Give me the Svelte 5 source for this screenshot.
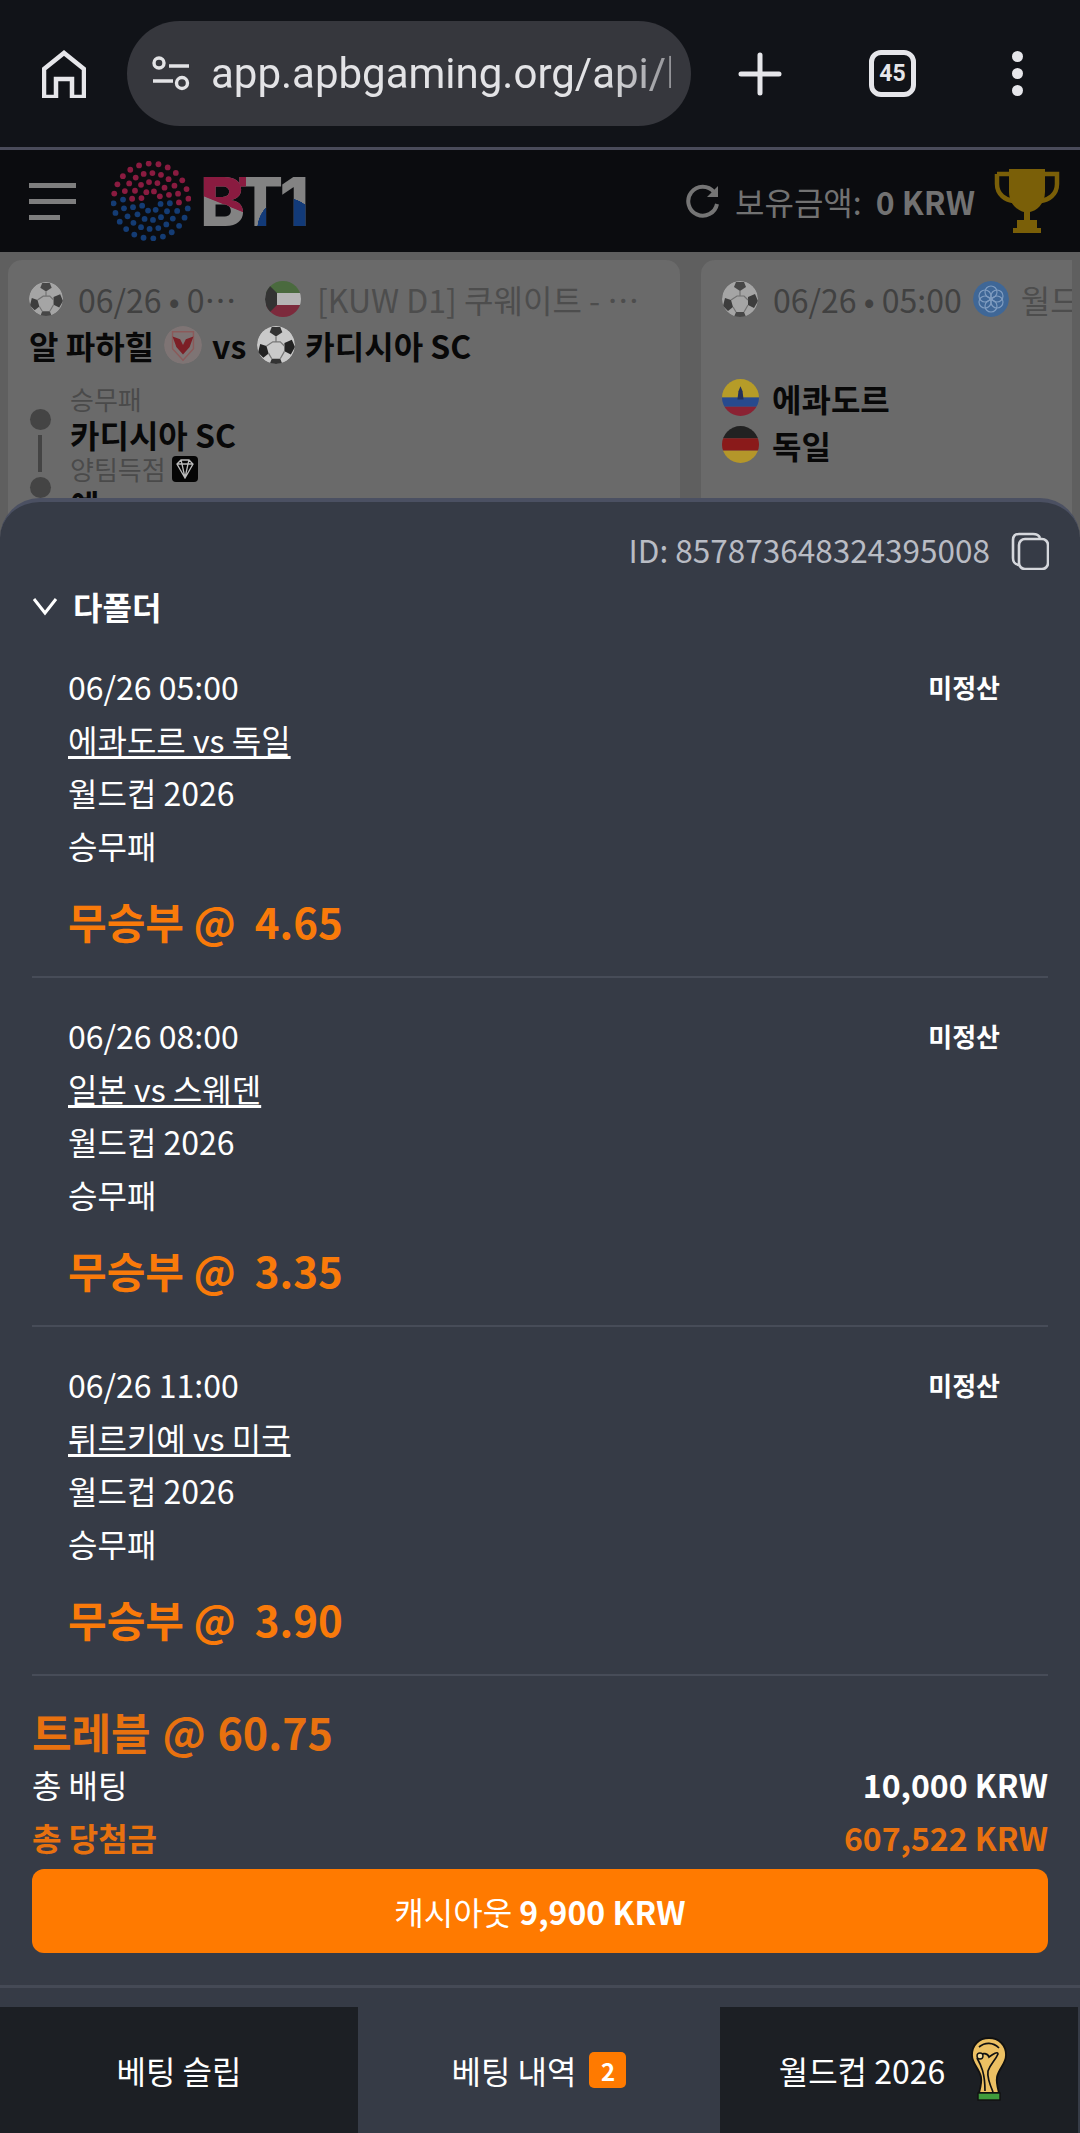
<script>
  const bets = [
    { date: '06/26 05:00', match: '에콰도르 vs 독일', odds: '4.65' },
    { date: '06/26 08:00', match: '일본 vs 스웨덴', odds: '3.35' },
    { date: '06/26 11:00', match: '튀르키예 vs 미국', odds: '3.90' }
  ];

  // logo dots, rings slightly twisted
  const dots = [];
  [[37.5, 24, 0.2], [28, 20, 0.05], [19, 14, 0.12], [10, 8, 0.3]].forEach(([r, n, off]) => {
    for (let i = 0; i < n; i++) {
      const a = (i / n) * Math.PI * 2 + off;
      const cx = 40 + r * Math.cos(a);
      const cy = 40 + r * Math.sin(a);
      dots.push({ cx, cy, fill: cy < 40 + (cx - 40) * 0.12 ? '#8a1b40' : '#143c74' });
    }
  });
</script>

{#snippet ball(size, dim)}
  <svg class="round" class:dim width={size} height={size} viewBox="0 0 36 36">
    <circle cx="18" cy="18" r="18" fill="#c9c9c9" />
    <path d="M14 1 L22 1 L24 6 L18 10 L12 6 Z" fill="#333" />
    <path d="M26 16 L33 13 L36 20 L32 27 L26 24 Z" fill="#222" />
    <path d="M3 17 L9 19 L11 26 L6 30 L1 25 Z" fill="#222" />
    <path d="M14 31 L22 31 L24 36 L12 36 Z" fill="#333" />
    <path d="M18 10 V15 M9 19 L15 15 H22 L26 19 M11 26 L14 31 M26 24 L22 31" stroke="#777" stroke-width="1.2" fill="none" />
  </svg>
{/snippet}

<div class="page">
  <div class="browser">
    <svg class="home" width="44" height="48" viewBox="0 0 44 48" fill="none" stroke="#e6e6ea" stroke-width="4.5">
      <path d="M2 47 V19 L22 3 L42 19 V47 H30 V29 H14 V47 Z" />
    </svg>
    <div class="pill">
      <svg width="40" height="40" viewBox="0 0 40 40" fill="none" stroke="#e3e3e6" stroke-width="3.4">
        <circle cx="8" cy="9" r="5" />
        <path d="M18 12 H38 M2 27 H22" />
        <circle cx="31" cy="29" r="5.5" />
      </svg>
      <span class="url">app.apbgaming.org/api/l</span>
    </div>
    <svg class="plus" width="44" height="44" viewBox="0 0 44 44" stroke="#e6e6ea" stroke-width="5" stroke-linecap="round">
      <path d="M22 3 V41 M3 22 H41" />
    </svg>
    <div class="tabcount">45</div>
    <div class="more"><i></i><i></i><i></i></div>
  </div>

  <header class="head">
    <div class="burger"><i></i><i></i><i class="short"></i></div>
    <svg class="dots" width="80" height="80" viewBox="0 0 80 80">
      {#each dots as d}
        <circle cx={d.cx} cy={d.cy} r="2.9" fill={d.fill} />
      {/each}
    </svg>
    <span class="brand">BT1</span>
    <div class="balance">
      <svg width="34" height="34" viewBox="0 0 34 34" fill="none" stroke="#757575" stroke-width="4">
        <path d="M28 8 A14.5 14.5 0 1 0 31 20" />
        <path d="M32 2 V13 H21 Z" fill="#757575" stroke="none" />
      </svg>
      <span class="bal-label">보유금액:</span>
      <b>0 KRW</b>
    </div>
    <svg class="cup" width="66" height="66" viewBox="0 0 66 66">
      <path d="M3 6 H16 M50 6 H63 V16 C63 27 54 32 47 33 M3 6 V16 C3 27 12 32 19 33" fill="none" stroke="#7a5f08" stroke-width="4.5" />
      <path d="M15 1 H51 V24 C51 36 42 43 36 44 V52 H43 V60 H47 V65 H19 V60 H23 V52 H30 V44 C24 43 15 36 15 24 Z" fill="#7a5f08" />
    </svg>
  </header>

  <div class="cards">
    <section class="card first">
      <div class="meta">
        {@render ball(34, true)}
        <span class="time">06/26 • 0⋯</span>
        <svg class="round flag" width="36" height="36" viewBox="0 0 36 36">
          <rect width="36" height="12" fill="#4a6a3e" />
          <rect y="12" width="36" height="12" fill="#b5b5b5" />
          <rect y="24" width="36" height="12" fill="#7c2a3c" />
          <path d="M0 0 L12 12 V24 L0 36 Z" fill="#333" />
        </svg>
        <span class="league">[KUW D1] 쿠웨이트 - ⋯</span>
      </div>
      <div class="teams">
        <span>알 파하힐</span>
        <svg class="round" width="38" height="38" viewBox="0 0 40 40">
          <circle cx="20" cy="20" r="20" fill="#7e7474" />
          <path d="M9 6 H31 V24 L20 36 L9 24 Z" fill="none" stroke="#8b5a5a" stroke-width="1.5" />
          <path d="M9 11 L17 14 L20 20 L23 14 L31 11 L27 22 L20 30 L13 22 Z" fill="#7c1f26" />
        </svg>
        <span class="vs">vs</span>
        {@render ball(38, false)}
        <span>카디시아 SC</span>
      </div>
      <div class="legs">
        <div class="rail"><i></i><em></em><i></i></div>
        <div class="leg-text">
          <div class="market">승무패</div>
          <div class="pick">카디시아 SC</div>
          <div class="market">양팀득점
            <svg class="gem" width="26" height="26" viewBox="0 0 26 26">
              <rect width="26" height="26" rx="4" fill="#050505" />
              <path d="M5 8 L9 4 H17 L21 8 L13 22 Z M5 8 H21 M9 4 L10 8 L13 22 L16 8 L17 4" fill="none" stroke="#bbb" stroke-width="1.3" />
            </svg>
          </div>
          <div class="pick">예</div>
        </div>
      </div>
    </section>

    <section class="card second">
      <div class="meta">
        {@render ball(36, true)}
        <span class="time">06/26 • 05:00</span>
        <svg class="round globe" width="36" height="36" viewBox="0 0 36 36" fill="none" stroke="#7f9cc0" stroke-width="1.2">
          <circle cx="18" cy="18" r="18" fill="#3f6797" stroke="none" />
          <circle cx="18" cy="11" r="6" /><circle cx="18" cy="25" r="6" />
          <circle cx="12" cy="15" r="6" /><circle cx="24" cy="15" r="6" />
          <circle cx="12" cy="21" r="6" /><circle cx="24" cy="21" r="6" />
        </svg>
        <span class="league">월드</span>
      </div>
      <div class="nation">
        <svg class="round" width="37" height="37" viewBox="0 0 36 36">
          <rect width="36" height="18" fill="#b69c28" />
          <rect y="18" width="36" height="9" fill="#274a8e" />
          <rect y="27" width="36" height="9" fill="#8a2233" />
          <path d="M18 7 L20 12 L21 20 H15 L16 12 Z" fill="#23305a" />
        </svg>
        <span>에콰도르</span>
      </div>
      <div class="nation">
        <svg class="round" width="37" height="37" viewBox="0 0 36 36">
          <rect width="36" height="12" fill="#222" />
          <rect y="12" width="36" height="12" fill="#8a1a1a" />
          <rect y="24" width="36" height="12" fill="#b4962a" />
        </svg>
        <span>독일</span>
      </div>
    </section>
  </div>

  <div class="sheet">
    <div class="body">
      <div class="idrow">
        <span>ID: 857873648324395008</span>
        <svg width="38" height="38" viewBox="0 0 38 38" fill="none" stroke="#d5d7dc" stroke-width="2.6">
          <path d="M8 33 C3 32 2 30 2 26 V8 C2 4 4 2 8 2 H22 C26 2 28 3 29 6" />
          <rect x="8" y="7" width="29" height="30" rx="6" />
        </svg>
      </div>
      <div class="multi">
        <svg width="26" height="19" viewBox="0 0 26 19" fill="none" stroke="#fff" stroke-width="3">
          <path d="M2 2 L13 16 L24 2" />
        </svg>
        <span>다폴더</span>
      </div>

      {#each bets as bet}
        <article class="bet">
          <div class="line">
            <span>{bet.date}</span>
            <b class="status">미정산</b>
          </div>
          <div class="line"><u>{bet.match}</u></div>
          <div class="line">월드컵 2026</div>
          <div class="line">승무패</div>
          <div class="odds">무승부 @ &nbsp;{bet.odds}</div>
        </article>
      {/each}

      <div class="treble">트레블 @ 60.75</div>
      <div class="sumrow">
        <span>총 배팅</span>
        <b>10,000 KRW</b>
      </div>
      <div class="sumrow win">
        <b>총 당첨금</b>
        <b>607,522 KRW</b>
      </div>
      <button class="cash">캐시아웃 <b>9,900 KRW</b></button>
    </div>

    <nav class="tabs">
      <div class="tab">베팅 슬립</div>
      <div class="tab active">베팅 내역 <span class="badge">2</span></div>
      <div class="tab">
        월드컵 2026
        <svg class="wc" width="36" height="64" viewBox="0 0 36 64">
          <path d="M18 1 C28 1 35 8 35 18 C35 27 28 31 26 40 C25 46 27 52 28 56 H8 C9 52 11 46 10 40 C8 31 1 27 1 18 C1 8 8 1 18 1 Z" fill="#ecc063" stroke="#111" stroke-width="1.8" />
          <path d="M8 10 C14 5 22 5 28 11 M7 20 C12 14 17 17 18 20 C22 17 27 14 27 17 C24 24 20 26 17 34 C16 40 19 48 22 55 M6 21 C10 28 14 36 14 54" fill="none" stroke="#111" stroke-width="1.7" />
          <circle cx="9" cy="19" r="3" fill="#f4dc9c" stroke="#111" stroke-width="1.4" />
          <rect x="7" y="56" width="22" height="7" fill="#3f9c3c" stroke="#111" stroke-width="1.4" />
        </svg>
      </div>
    </nav>
  </div>
</div>

<style>
  :global(body) {
    margin: 0;
    background: #5f5f5f;
  }

  .page {
    position: relative;
    width: 1080px;
    height: 2133px;
    overflow: hidden;
    background: #5f5f5f;
    font-family: "Noto Sans CJK KR", "Noto Sans", sans-serif;
    color: #fff;
  }

  svg {
    display: block;
    flex: none;
  }

  .round {
    border-radius: 50%;
  }
  .dim {
    opacity: 0.62;
  }

  /* browser bar */
  .browser {
    height: 147px;
    display: flex;
    align-items: center;
    background: #111318;
    border-bottom: 3px solid #4a4b5a;
  }
  .home {
    margin-left: 42px;
  }
  .pill {
    margin-left: 41px;
    width: 564px;
    height: 105px;
    box-sizing: border-box;
    padding: 0 20px 0 24px;
    display: flex;
    align-items: center;
    gap: 20px;
    border-radius: 53px;
    background: #36373d;
  }
  .url {
    font-family: Roboto, sans-serif;
    font-size: 42px;
    white-space: nowrap;
    overflow: hidden;
    color: #e3e3e6;
    -webkit-mask-image: linear-gradient(to right, #000 85%, #0008 100%);
    mask-image: linear-gradient(to right, #000 85%, #0008 100%);
  }
  .plus {
    margin-left: 47px;
  }
  .tabcount {
    margin-left: 87px;
    width: 47px;
    height: 47px;
    box-sizing: border-box;
    display: grid;
    place-items: center;
    border: 5px solid #e6e6ea;
    border-radius: 12px;
    font-family: Roboto, sans-serif;
    font-weight: 700;
    font-size: 23px;
    color: #e6e6ea;
  }
  .more {
    margin-left: 96px;
    display: grid;
    gap: 6px;
  }
  .more i {
    width: 11px;
    height: 11px;
    border-radius: 50%;
    background: #e6e6ea;
  }

  /* site header */
  .head {
    height: 102px;
    display: flex;
    align-items: center;
    background: #0b0c0f;
    padding-left: 29px;
  }
  .burger {
    width: 47px;
    display: grid;
    gap: 11px;
  }
  .burger i {
    height: 5px;
    background: #7e7e7e;
  }
  .burger i.short {
    width: 31px;
  }
  .dots {
    margin-left: 35px;
  }
  .brand {
    margin-left: 9px;
    width: 116px;
    font-family: Inter, sans-serif;
    font-weight: 800;
    font-size: 68px;
    line-height: 70px;
    letter-spacing: -4px;
    white-space: nowrap;
    color: transparent;
    background:
      radial-gradient(ellipse 30px 32px at 87px 64px, #123a78 99%, transparent 100%),
      linear-gradient(22deg, transparent 46%, #8a1b40 47%) 0 0 / 46px 100% no-repeat,
      #838383;
    -webkit-background-clip: text;
    background-clip: text;
  }
  .balance {
    margin-left: 370px;
    display: flex;
    align-items: center;
    color: #727272;
    font-size: 32px;
  }
  .bal-label {
    margin-left: 15px;
  }
  .balance b {
    margin-left: 14px;
    font-size: 32px;
  }
  .cup {
    margin-left: 19px;
  }

  /* dimmed cards behind the sheet */
  .cards {
    margin: 8px 8px 0;
    display: flex;
    gap: 21px;
    overflow: hidden;
  }
  .card {
    flex: none;
    width: 672px;
    height: 400px;
    box-sizing: border-box;
    padding: 22px 21px 0;
    border-radius: 14px 14px 0 0;
    background: #6a6a6a;
    overflow: hidden;
  }
  .meta {
    height: 36px;
    margin-top: -1px;
    display: flex;
    align-items: center;
    font-size: 32px;
    color: #414141;
    white-space: nowrap;
  }
  .time {
    margin-left: 15px;
  }
  .first .time {
    width: 154px;
  }
  .flag {
    margin-left: 33px;
  }
  .globe {
    margin-left: 11px;
  }
  .league {
    margin-left: 16px;
    color: #4d4d4d;
  }
  .second .league {
    margin-left: 12px;
  }
  .teams {
    margin-top: 6px;
    height: 44px;
    line-height: 44px;
    display: flex;
    align-items: center;
    gap: 10px;
    font-size: 32px;
    font-weight: 700;
    color: #080808;
    white-space: nowrap;
  }
  .vs {
    margin-right: 1px;
  }
  .legs {
    margin-top: 15px;
    display: flex;
    gap: 19px;
  }
  .rail {
    margin-top: 27px;
    width: 22px;
    display: flex;
    flex-direction: column;
    align-items: center;
    gap: 5px;
  }
  .rail i {
    width: 21px;
    height: 21px;
    border-radius: 50%;
    background: #444;
  }
  .rail em {
    width: 4px;
    height: 37px;
    background: #444;
  }
  .market {
    height: 34px;
    line-height: 34px;
    display: flex;
    align-items: center;
    gap: 6px;
    font-size: 26px;
    color: #4a4a4a;
  }
  .pick {
    height: 36px;
    line-height: 36px;
    font-size: 32px;
    font-weight: 700;
    color: #080808;
  }
  .nation {
    height: 47px;
    display: flex;
    align-items: center;
    gap: 13px;
    font-size: 32px;
    font-weight: 700;
    color: #080808;
  }
  .meta + .nation {
    margin-top: 57px;
  }

  /* bottom sheet */
  .sheet {
    position: absolute;
    top: 498px;
    left: 0;
    right: 0;
    bottom: 0;
    background: #363b46;
    border-top: 4px solid #4b5062;
    border-radius: 40px 40px 0 0;
  }
  .body {
    padding: 27px 32px 0;
  }
  .idrow {
    height: 40px;
    display: flex;
    align-items: center;
    justify-content: flex-end;
    gap: 21px;
    color: #b9bcc4;
    font-size: 31.5px;
  }
  .idrow svg {
    margin-right: -1px;
    margin-top: 4px;
  }
  .multi {
    margin-top: 17px;
    height: 40px;
    display: flex;
    align-items: center;
    gap: 15px;
    font-size: 32px;
    font-weight: 700;
  }
  .bet {
    padding: 31px 36px 25px 36px;
    border-bottom: 2px solid #474c58;
  }
  .multi + .bet {
    margin-top: 3px;
  }
  .line {
    height: 53px;
    line-height: 53px;
    display: flex;
    justify-content: space-between;
    font-size: 32px;
  }
  .line u {
    text-decoration-thickness: 3px;
    text-underline-offset: 3px;
  }
  .status {
    margin-right: 12px;
    font-size: 26px;
  }
  .odds {
    margin-top: 19px;
    line-height: 60px;
    font-size: 42px;
    font-weight: 700;
    color: #f97a0a;
  }
  .treble {
    margin-top: 25px;
    line-height: 60px;
    font-size: 43px;
    font-weight: 700;
    word-spacing: 2px;
    color: #e8710f;
  }
  .sumrow {
    height: 46px;
    display: flex;
    align-items: center;
    justify-content: space-between;
    font-size: 32px;
  }
  .win {
    margin-top: 7px;
    color: #e8710f;
  }
  .cash {
    display: block;
    width: 100%;
    height: 84px;
    margin-top: 9px;
    border: 0;
    border-radius: 12px;
    background: #ff7a00;
    color: #fff;
    font: inherit;
    font-size: 32px;
  }
  .tabs {
    margin-top: 32px;
    padding-top: 19px;
    border-top: 3px solid #454a56;
    display: grid;
    grid-template-columns: 358px 362px 358px;
  }
  .tab {
    height: 126px;
    display: flex;
    align-items: center;
    justify-content: center;
    gap: 13px;
    background: #1c1f24;
    font-size: 32px;
  }
  .tab.active {
    background: #363b46;
  }
  .badge {
    width: 37px;
    height: 36px;
    display: grid;
    place-items: center;
    border-radius: 5px;
    background: #ff7a00;
    font-size: 24px;
    font-weight: 700;
  }
  .wc {
    margin: -2px 12px 0 13px;
  }
</style>
